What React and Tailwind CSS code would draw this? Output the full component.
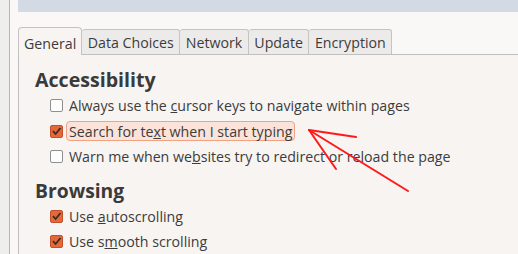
import React from "react";

function Check({ checked }) {
  if (checked) {
    return (
      <span className="w-[13px] h-[13px] rounded-[2px] bg-[#e3683c] border border-[#c2512a] flex items-center justify-center shrink-0">
        <svg width="11" height="11" viewBox="0 0 11 11">
          <path d="M2 5.2 L4.6 8 L9.5 2" fill="none" stroke="#3b2a22" strokeWidth="1.8" />
        </svg>
      </span>
    );
  }
  return <span className="w-[13px] h-[13px] rounded-[2px] bg-[#fdfdfd] border border-[#8f8f8f] shrink-0" />;
}

function Row({ checked, children, highlight }) {
  return (
    <div className="flex items-center h-[25.5px] pl-[15px]">
      <Check checked={checked} />
      {highlight ? (
        <span className="ml-[3px] px-[2px] h-[20px] flex items-center rounded-[4px] bg-[#fbe3da] border border-[#f0a283]">{children}</span>
      ) : (
        <span className="ml-[6px]">{children}</span>
      )}
    </div>
  );
}

const tabs = ["Data Choices", "Network", "Update", "Encryption"];

export default function App() {
  return (
    <div
      className="relative w-[518px] h-[254px] overflow-hidden flex bg-[#f9f8f7] text-[#3c3c3c]"
      style={{ fontFamily: "'Open Sans', 'DejaVu Sans', sans-serif" }}
    >
      <div className="w-[10px] bg-[#eeeeec] border-r border-[#b5b5b3] shrink-0" />
      <div className="flex-1 flex flex-col pl-[8px]">
        <div className="h-[12px] bg-[#d3dae3] shrink-0" />
        <div className="flex items-end mt-[15px] h-[27px] shrink-0 text-[14.2px] leading-[18px]">
          <div className="h-[28px] px-[5px] pt-[4px] flex items-center bg-[#f8f4f2] border border-b-0 border-[#c6c4c2] rounded-t-[4px] relative top-[1px] z-10">
            General
          </div>
          {tabs.map((t) => (
            <div
              key={t}
              className="h-[25px] px-[5.5px] pt-[2px] flex items-center bg-[#edebea] border border-l-0 border-b-0 border-[#c6c4c2] rounded-t-[3px]"
            >
              {t}
            </div>
          ))}
        </div>
        <div className="flex-1 bg-[#f8f4f2] border-l border-t border-[#c2c0be] pl-[16px] pt-[11px]">
          <div className="text-[19.6px] font-bold text-[#3a3a3a] leading-[28px]">Accessibility</div>
          <div className="text-[14.2px] -mt-[1px]">
            <Row>
              Always use the <u>c</u>ursor keys to navigate within pages
            </Row>
            <Row checked highlight>
              Search for te<u>x</u>t when I start typing
            </Row>
            <Row>
              Warn me when we<u>b</u>sites try to redirect or reload the page
            </Row>
          </div>
          <div className="text-[19.3px] font-bold text-[#3a3a3a] leading-[28px] mt-[7px]">Browsing</div>
          <div className="text-[14.2px] -mt-[1px]">
            <Row checked>
              Use <u>a</u>utoscrolling
            </Row>
            <Row checked>
              Use s<u>m</u>ooth scrolling
            </Row>
          </div>
        </div>
      </div>
      <svg className="absolute left-0 top-0 pointer-events-none" width="518" height="254">
        <g stroke="#ff1a1a" strokeWidth="2" fill="none" strokeLinecap="round">
          <path d="M309 130 L356 137" />
          <path d="M309 130 L336 169" />
          <path d="M309 130 L408 191" />
        </g>
      </svg>
    </div>
  );
}
